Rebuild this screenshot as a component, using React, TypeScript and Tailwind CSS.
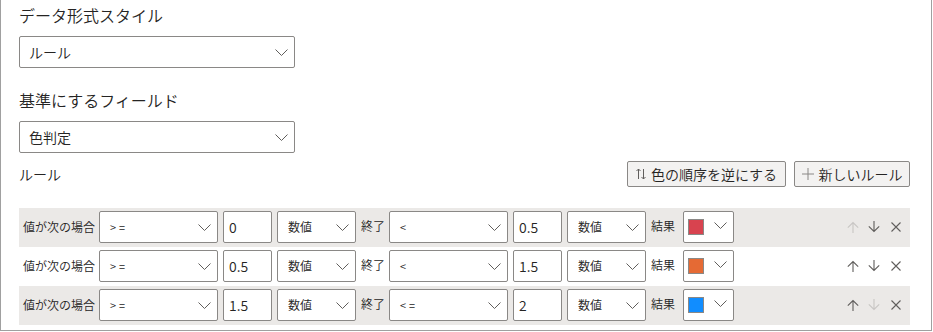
import React from "react";

const FONT = "font-['Noto_Sans_CJK_JP','Noto_Sans',sans-serif] font-[350]";

type Rule = {
  fromOp: string;
  from: string;
  toOp: string;
  to: string;
  color: string;
  upDisabled: boolean;
  downDisabled: boolean;
  shaded: boolean;
};

const RULES: Rule[] = [
  { fromOp: ">=", from: "0", toOp: "<", to: "0.5", color: "#d8434f", upDisabled: true, downDisabled: false, shaded: true },
  { fromOp: ">=", from: "0.5", toOp: "<", to: "1.5", color: "#e56a34", upDisabled: false, downDisabled: false, shaded: false },
  { fromOp: ">=", from: "1.5", toOp: "<=", to: "2", color: "#118dff", upDisabled: false, downDisabled: true, shaded: true },
];

function Chevron({ className = "" }: { className?: string }) {
  return (
    <svg width="13" height="7" viewBox="0 0 13 7" className={className} fill="none">
      <path d="M0.5 0.5 L6.5 6.5 L12.5 0.5" stroke="#605e5c" strokeWidth="1" />
    </svg>
  );
}

function Select({ value, width, text = "text-xs", pad = "pl-[10px]" }: { value: string; width: string; text?: string; pad?: string }) {
  const isOp = /^[<>=]+$/.test(value);
  return (
    <div className={`${width} h-8 flex items-center justify-between ${pad} pr-[6px] border border-[#8a8886] rounded-[2px] bg-white ${text} text-[#252423]`}>
      <span className={isOp ? "tracking-[3px]" : ""}>{value}</span>
      <Chevron />
    </div>
  );
}

function Input({ value }: { value: string }) {
  return (
    <div className="w-[49px] h-8 flex items-center pl-[5px] border border-[#8a8886] rounded-[2px] bg-white text-sm text-[#252423]">
      {value}
    </div>
  );
}

function Arrow({ dir, disabled }: { dir: "up" | "down"; disabled: boolean }) {
  const d = dir === "up" ? "M6 1.5 V12 M0.8 6.7 L6 1.5 L11.2 6.7" : "M6 0 V10.5 M0.8 5.3 L6 10.5 L11.2 5.3";
  return (
    <svg width="12" height="12" viewBox="0 0 12 12" fill="none">
      <path d={d} stroke={disabled ? "#c8c6c4" : "#605e5c"} strokeWidth="1.1" />
    </svg>
  );
}

function RuleRow({ r }: { r: Rule }) {
  return (
    <div className={`h-[39px] pt-[3px] flex items-start gap-[5px] ${r.shaded ? "bg-[#ebe9e7]" : "bg-white"}`}>
      <span className="w-[75px] pl-[4px] h-8 flex items-center text-xs text-[#252423] whitespace-nowrap">値が次の場合</span>
      <Select value={r.fromOp} width="w-[119px]" text="text-[11px]" />
      <Input value={r.from} />
      <Select value="数値" width="w-[79px]" />
      <span className="w-[23px] h-8 flex items-center pb-[2px] text-xs text-[#252423] whitespace-nowrap">終了</span>
      <Select value={r.toOp} width="w-[119px]" text="text-[11px]" />
      <Input value={r.to} />
      <Select value="数値" width="w-[79px]" />
      <span className="w-[27px] h-8 flex items-center pb-[2px] text-xs text-[#252423] whitespace-nowrap">結果</span>
      <div className="w-[51px] h-8 flex items-start pl-[4px] pr-[6px] border border-[#8a8886] rounded-[2px] bg-white">
        <div className="mt-[7px] w-4 h-4 border border-[#8a8886]" style={{ backgroundColor: r.color }} />
        <Chevron className="ml-auto mt-[10px]" />
      </div>
      <div className="ml-auto h-8 flex items-center gap-[9px] pr-[9px]">
        <Arrow dir="up" disabled={r.upDisabled} />
        <Arrow dir="down" disabled={r.downDisabled} />
        <svg width="10" height="10" viewBox="0 0 10 10" fill="none" className="ml-[2px]">
          <path d="M0.5 0.5 L9.5 9.5 M9.5 0.5 L0.5 9.5" stroke="#605e5c" strokeWidth="1.1" />
        </svg>
      </div>
    </div>
  );
}

export default function App() {
  return (
    <div className={`${FONT} w-[932px] h-[331px] bg-white border-x border-b border-[#a0a0a0] pl-[18px] pr-[21px]`}>
      <div className="pt-[4px] h-[26px] text-base leading-[22px] text-[#252423]">データ形式スタイル</div>
      <div className="mt-[10px]">
        <Select value="ルール" width="w-[276px]" text="text-sm" pad="pl-[9px]" />
      </div>
      <div className="mt-[21px] h-[22px] text-base leading-[22px] text-[#252423]">基準にするフィールド</div>
      <div className="mt-[10px]">
        <Select value="色判定" width="w-[276px]" text="text-sm" pad="pl-[9px]" />
      </div>
      <div className="mt-[8px] h-[26px] flex items-center justify-between">
        <span className="text-sm text-[#252423]">ルール</span>
        <div className="flex gap-2">
          <button className="h-[26px] w-[159px] flex items-center justify-center gap-[5px] border border-[#8a8886] rounded-[2px] bg-[#f3f2f1] text-sm text-[#252423]">
            <svg width="10" height="12" viewBox="0 0 10 12" fill="none">
              <path d="M2.5 11 V1 M0.5 3 L2.5 1 L4.5 3 M7.5 1 V11 M5.5 9 L7.5 11 L9.5 9" stroke="#605e5c" strokeWidth="1" />
            </svg>
            色の順序を逆にする
          </button>
          <button className="h-[26px] w-[116px] flex items-center justify-center gap-[5px] border border-[#8a8886] rounded-[2px] bg-[#f3f2f1] text-sm text-[#252423]">
            <svg width="12" height="12" viewBox="0 0 12 12" fill="none">
              <path d="M6 0 V12 M0 6 H12" stroke="#8a8886" strokeWidth="1" />
            </svg>
            新しいルール
          </button>
        </div>
      </div>
      <div className="mt-[21px] flex flex-col">
        {RULES.map((r, i) => (
          <RuleRow key={i} r={r} />
        ))}
      </div>
    </div>
  );
}
